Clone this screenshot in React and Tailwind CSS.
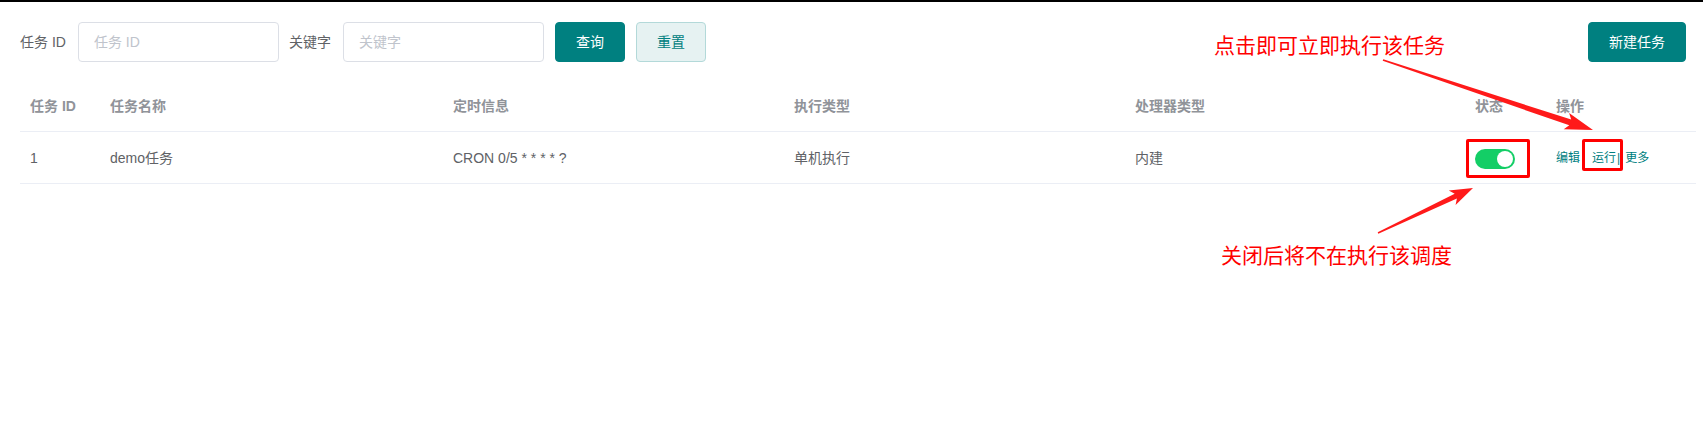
import React from 'react';

/* ---- arrow shape for the red annotations ---- */
function arrowPoints([x0, y0], [x1, y1], head, wing, w0, w1) {
  const dx = x1 - x0;
  const dy = y1 - y0;
  const len = Math.hypot(dx, dy);
  const ux = dx / len;
  const uy = dy / len;
  const nx = -uy;
  const ny = ux;
  const bx = x1 - ux * head;
  const by = y1 - uy * head;
  const jx = bx + ux * 4;
  const jy = by + uy * 4;
  const pts = [
    [x0 + nx * w0, y0 + ny * w0],
    [jx + nx * w1, jy + ny * w1],
    [bx + nx * wing, by + ny * wing],
    [x1, y1],
    [bx - nx * wing, by - ny * wing],
    [jx - nx * w1, jy - ny * w1],
    [x0 - nx * w0, y0 - ny * w0],
  ];
  return pts.map((p) => p.map((v) => v.toFixed(1)).join(',')).join(' ');
}

function Toggle({ on }) {
  return (
    <div className={`w-10 h-5 rounded-full flex items-center px-[2px] ${on ? 'bg-[#13ce66] justify-end' : 'bg-[#dcdfe6] justify-start'}`}>
      <div className="w-4 h-4 rounded-full bg-white" />
    </div>
  );
}

const columns = ['任务 ID', '任务名称', '定时信息', '执行类型', '处理器类型', '状态', '操作'];

const rows = [
  { id: 1, name: 'demo任务', timing: 'CRON 0/5 * * * * ?', exec: '单机执行', processor: '内建', enabled: true },
];

export default function App() {
  return (
    <div className="relative w-[1703px] h-[430px] bg-white overflow-hidden font-['Liberation_Sans','Noto_Sans_CJK_SC',sans-serif] text-sm">
      <div className="h-[2px] bg-black" />

      {/* Filter bar */}
      <div className="flex items-center mt-[20px] pl-5 pr-[17px] h-10">
        <span className="text-[#606266] mr-3">任务 ID</span>
        <input
          className="w-[201px] h-10 border border-[#dcdfe6] rounded pl-[15px] outline-none placeholder:text-[#c0c4cc]"
          placeholder="任务 ID"
        />
        <span className="text-[#606266] ml-[10px] mr-3">关键字</span>
        <input
          className="w-[201px] h-10 border border-[#dcdfe6] rounded pl-[15px] outline-none placeholder:text-[#c0c4cc]"
          placeholder="关键字"
        />
        <button className="ml-[11px] w-[70px] h-10 rounded bg-[#008080] border border-[#008080] text-white">查询</button>
        <button className="ml-[11px] w-[70px] h-10 rounded bg-[#e6f2f2] border border-[#b3d9d9] text-[#008080]">重置</button>
        <button className="ml-auto w-[98px] h-10 rounded bg-[#008080] border border-[#008080] text-white">新建任务</button>
      </div>

      {/* Table */}
      <div className="mt-[18px] ml-5 mr-[7px]">
        <div className="grid grid-cols-[80px_343px_341px_341px_340px_81px_1fr] h-[52px] items-center border-b border-[#ebeef5] text-[#909399] font-bold">
          {columns.map((c) => (
            <div key={c} className="px-[10px]">{c}</div>
          ))}
        </div>
        {rows.map((r) => (
          <div key={r.id} className="grid grid-cols-[80px_343px_341px_341px_340px_81px_1fr] h-[52px] items-center border-b border-[#ebeef5] text-[#606266]">
            <div className="px-[10px]">{r.id}</div>
            <div className="px-[10px]">{r.name}</div>
            <div className="px-[10px]">{r.timing}</div>
            <div className="px-[10px]">{r.exec}</div>
            <div className="px-[10px]">{r.processor}</div>
            <div className="px-[10px] pt-[2px]">
              <Toggle on={r.enabled} />
            </div>
            <div className="px-[10px] flex items-center text-xs text-[#008080]">
              <span>编辑</span>
              <span className="ml-[12px]">运行</span>
              <span className="ml-[1px] mr-[5px]">|</span>
              <span>更多</span>
            </div>
          </div>
        ))}
      </div>

      {/* Annotations */}
      <div className="absolute left-[1466px] top-[139px] w-[64px] h-[39px] border-[3px] border-[#ff0000] rounded-[2px]" />
      <div className="absolute left-[1582px] top-[139px] w-[41px] h-[32px] border-[3px] border-[#ff0000] rounded-[2px]" />

      <div className="absolute left-[1214px] top-[35px] text-[21px] leading-none text-[#ff0000]">点击即可立即执行该任务</div>
      <div className="absolute left-[1221px] top-[245px] text-[21px] leading-none text-[#ff0000]">关闭后将不在执行该调度</div>

      <svg className="absolute left-0 top-0 pointer-events-none" width="1703" height="430">
        <polygon fill="#ff1a1a" points={arrowPoints([1383, 60], [1593, 130], 28, 8.5, 0.8, 3)} />
        <polygon fill="#ff1a1a" points={arrowPoints([1378, 233], [1473, 188], 23, 8, 0.8, 2.6)} />
      </svg>
    </div>
  );
}
